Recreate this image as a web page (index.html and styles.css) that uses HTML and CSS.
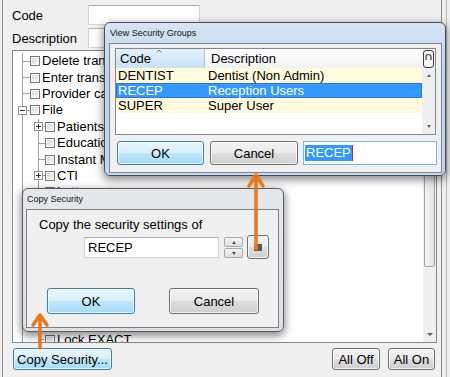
FILE: index.html
```html
<!DOCTYPE html>
<html>
<head>
<meta charset="utf-8">
<title>Security</title>
<link rel="stylesheet" href="styles.css">
</head>
<body>
<div class="outer">
  <div class="win">
    <div class="field"><span class="lbl">Code</span><div class="tb"></div></div>
    <div class="field"><span class="lbl">Description</span><div class="tb"></div></div>
    <div class="tree">
      <div class="tree-body">
        <div class="row"><span class="c1 br"></span><span class="cb"></span><span class="txt">Delete transactions</span></div>
        <div class="row"><span class="c1 br"></span><span class="cb"></span><span class="txt">Enter transactions</span></div>
        <div class="row"><span class="c1 br"></span><span class="cb"></span><span class="txt">Provider calendar</span></div>
        <div class="row"><span class="c1 br"><span class="exp minus"></span></span><span class="cb"></span><span class="txt">File</span></div>
        <div class="row"><span class="c1"></span><span class="c2 br"><span class="exp plus"></span></span><span class="cb"></span><span class="txt">Patients</span></div>
        <div class="row"><span class="c1"></span><span class="c2 br"></span><span class="cb"></span><span class="txt">Education</span></div>
        <div class="row"><span class="c1"></span><span class="c2 br"></span><span class="cb"></span><span class="txt">Instant Messages</span></div>
        <div class="row"><span class="c1"></span><span class="c2 br"><span class="exp plus"></span></span><span class="cb"></span><span class="txt">CTI</span></div>
        <div class="row"><span class="c1"></span><span class="c2 br"></span><span class="cb"></span><span class="txt">Letters</span></div>
        <div class="row"><span class="c1"></span><span class="c2 br"></span><span class="cb"></span><span class="txt">Recall</span></div>
        <div class="row"><span class="c1"></span><span class="c2 br"></span><span class="cb"></span><span class="txt">Referrals</span></div>
        <div class="row"><span class="c1"></span><span class="c2 br"></span><span class="cb"></span><span class="txt">Reports</span></div>
        <div class="row"><span class="c1"></span><span class="c2 br"></span><span class="cb"></span><span class="txt">Setup</span></div>
        <div class="row"><span class="c1"></span><span class="c2 br"></span><span class="cb"></span><span class="txt">Statements</span></div>
        <div class="row"><span class="c1"></span><span class="c2 br"></span><span class="cb"></span><span class="txt">Utilities</span></div>
        <div class="row"><span class="c1"></span><span class="c2 br"></span><span class="cb"></span><span class="txt">Lab cases</span></div>
        <div class="row"><span class="c1"></span><span class="c2 br"></span><span class="cb"></span><span class="txt">Backup</span></div>
        <div class="row"><span class="c1"></span><span class="c2 br"></span><span class="cb"></span><span class="txt">Lock EXACT</span></div>
      </div>
      <div class="vsb">
        <div class="sbb"></div>
        <div class="thumb"></div>
        <div class="track"></div>
        <div class="sbb"><span class="tri-dn"></span></div>
      </div>
    </div>
    <div class="bottom">
      <button class="btn hot copy">Copy Security...</button>
      <button class="btn alloff">All Off</button>
      <button class="btn allon">All On</button>
    </div>
  </div>
</div>

<div class="dlg dlg-view">
  <div class="title">View Security Groups</div>
  <div class="panel">
    <div class="grid">
      <div class="gmain">
        <div class="ghead">
          <div class="gh code">Code<svg class="sort" width="6" height="4" viewBox="0 0 6 4"><path d="M0.5 3.5 L3 1 L5.5 3.5" stroke="#6d7f93" stroke-width="1" fill="none"/></svg></div>
          <div class="gh desc">Description</div>
        </div>
        <div class="grow"><span class="gc code">DENTIST</span><span class="gc desc">Dentist (Non Admin)</span></div>
        <div class="grow sel"><span class="gc code">RECEP</span><span class="gc desc">Reception Users</span></div>
        <div class="grow"><span class="gc code">SUPER</span><span class="gc desc">Super User</span></div>
      </div>
      <div class="gside">
        <div class="gcorner"><svg width="11" height="18" viewBox="0 0 11 18"><rect x="0.5" y="0.5" width="10" height="17" rx="2.5" fill="#f4f4f4" stroke="#3d3d3d"/><path d="M3 10 V7 A2.5 2.5 0 0 1 8 7 V10" stroke="#3d3d3d" stroke-width="1.2" fill="none"/></svg></div>
        <div class="gsb">
          <span class="tri-up"></span>
          <span class="tri-dn"></span>
        </div>
      </div>
    </div>
    <div class="brow">
      <button class="btn hot ok1">OK</button>
      <button class="btn cancel1">Cancel</button>
      <div class="tbx"><span class="seltxt">RECEP</span><span class="caret"></span></div>
    </div>
  </div>
</div>

<div class="dlg dlg-copy">
  <div class="title">Copy Security</div>
  <div class="panel">
    <div class="clabel">Copy the security settings of</div>
    <div class="crow">
      <div class="cinput">RECEP</div>
      <div class="spin">
        <div class="spb"><span class="stri up"></span></div>
        <div class="spb"><span class="stri dn"></span></div>
      </div>
      <button class="btn browse"><svg width="8" height="7" viewBox="0 0 8 7"><path d="M0 0 H8 V7 H0 Z" fill="#5a5a5a"/><path d="M0 0 H3 L0 3 Z" fill="#d8d8d8"/></svg></button>
    </div>
    <div class="cbtns">
      <button class="btn hot ok2">OK</button>
      <button class="btn cancel2">Cancel</button>
    </div>
  </div>
</div>

<svg class="arrows" width="450" height="377" viewBox="0 0 450 377">
  <g stroke="#ec761c" stroke-width="3.5" fill="none" stroke-linecap="round" stroke-linejoin="round">
    <path d="M40 348 V317"/>
    <path d="M33 325 L40 315 L47 325"/>
    <path d="M256 249 V177"/>
    <path d="M249 186 L256 175 L263 186"/>
  </g>
</svg>
</body>
</html>
```

FILE: styles.css
```css
* { box-sizing: border-box; }
html, body { margin: 0; padding: 0; }
body {
  width: 450px;
  height: 377px;
  overflow: hidden;
  position: relative;
  background: #f0f0f0;
  font-family: "Liberation Sans", Arial, sans-serif;
  font-size: 13px;
  color: #000;
}
button { font-family: inherit; font-size: 13px; color: #000; padding: 0; margin: 0; }

.outer { width: 447px; height: 377px; border-right: 1px solid #b8b8b8; }
.win {
  margin-left: 2px;
  width: 440px;
  height: 377px;
  border-left: 1px solid #8c8c8c;
  border-right: 1px solid #8c8c8c;
  padding: 5px 0 0 9px;
}
.field { display: flex; align-items: center; height: 20px; }
.field + .field { margin-top: 3px; }
.lbl { width: 76px; }
.tb { width: 112px; height: 20px; background: #fff; border: 1px solid #d0d3d8; border-top-color: #abadb3; }

.tree {
  margin-top: 2px;
  width: 425px;
  height: 293px;
  border: 1px solid #828790;
  background: #fff;
  display: flex;
  overflow: hidden;
}
.tree-body { flex: 1; padding-top: 2px; overflow: hidden; }
.row { display: flex; align-items: center; height: 16.4px; white-space: nowrap; }
.c1, .c2 { height: 100%; flex: none; display: flex; align-items: center; }
.c1 { width: 17px; background: linear-gradient(#a0a0a0, #a0a0a0) 9px 0 / 1px 100% no-repeat; }
.c1.br {
  background:
    linear-gradient(#a0a0a0, #a0a0a0) 9px 0 / 1px 100% no-repeat,
    linear-gradient(#a0a0a0, #a0a0a0) 9px 50% / 8px 1px no-repeat;
}
.c2 { width: 15px; background: linear-gradient(#a0a0a0, #a0a0a0) 8px 0 / 1px 100% no-repeat; }
.c2.br {
  background:
    linear-gradient(#a0a0a0, #a0a0a0) 8px 0 / 1px 100% no-repeat,
    linear-gradient(#a0a0a0, #a0a0a0) 8px 50% / 7px 1px no-repeat;
}
.exp {
  width: 9px; height: 9px; flex: none;
  border: 1px solid #8f8f8f;
  background: #fff;
}
.c1 .exp { margin-left: 5px; }
.c2 .exp { margin-left: 4px; }
.exp.minus { background: linear-gradient(#333, #333) center / 5px 1px no-repeat, #fff; }
.exp.plus {
  background:
    linear-gradient(#333, #333) center / 5px 1px no-repeat,
    linear-gradient(#333, #333) center / 1px 5px no-repeat,
    #fff;
}
.cb {
  width: 10px; height: 10px; flex: none;
  border: 1px solid #767676;
  background: linear-gradient(135deg, #d6d6d6, #f8f8f8);
  box-shadow: inset 0 0 0 1px #fbfbfb;
  margin-right: 2px;
}
.txt { line-height: 16px; }

.vsb { width: 13px; flex: none; background: #f0f0f0; display: flex; flex-direction: column; }
.sbb { height: 16px; flex: none; display: flex; align-items: center; justify-content: center; }
.thumb {
  height: 200px; flex: none; margin: 0 1px;
  border: 1px solid #a3a3a3; border-radius: 2px;
  background: linear-gradient(90deg, #f3f3f3, #e2e2e2);
}
.track { flex: 1; }
.tri-dn, .tri-up { width: 0; height: 0; border-left: 3px solid transparent; border-right: 3px solid transparent; }
.tri-dn { border-top: 3px solid #606060; }
.tri-up { border-bottom: 3px solid #606060; }

.bottom { display: flex; margin-top: 5px; width: 423px; padding-left: 1px; }
.btn {
  height: 22px;
  border: 1px solid #707070;
  border-radius: 3px;
  background: linear-gradient(#f2f2f2 0%, #ebebeb 48%, #dddddd 52%, #cfcfcf 100%);
  box-shadow: inset 0 0 0 1px rgba(255, 255, 255, 0.7);
  display: flex; align-items: center; justify-content: center;
}
.btn.hot {
  border-color: #3c7fb1;
  background: linear-gradient(#eaf6fd 0%, #d9f0fc 48%, #bee6fd 52%, #a7d9f5 100%);
}
.copy { width: 99px; }
.alloff { width: 48px; margin-left: auto; }
.allon { width: 47px; margin-left: 8px; }

.dlg {
  position: absolute;
  border: 1px solid #46505b;
  border-radius: 6px;
  box-shadow: 0 3px 9px 1px rgba(0, 0, 0, 0.45);
  display: flex;
  flex-direction: column;
}
.title { height: 20px; flex: none; font-size: 9px; display: flex; align-items: center; padding-left: 1px; color: #111; }
.panel { border: 1px solid #7b8591; background: #f0f0f0; flex: none; }

.dlg-view {
  left: 104px; top: 22px; width: 342px; height: 154px;
  padding-left: 4px;
  background: linear-gradient(#d6e4f3, #bed4eb 35%, #c4d7ec);
}
.dlg-view .panel { width: 333px; height: 130px; padding: 4px 0 0 5px; }
.grid { width: 321px; height: 87px; border: 1px solid #828790; background: #fff; display: flex; }
.gmain { width: 306px; display: flex; flex-direction: column; }
.ghead { display: flex; height: 19px; }
.gh { display: flex; align-items: center; border-right: 1px solid #d5d5d5; }
.gh.code {
  width: 89px; padding-left: 4px; position: relative;
  background: linear-gradient(#e3f1fc, #c8e2f7);
  border-right-color: #9fc7e7;
}
.sort { position: absolute; left: 40px; top: 0; }
.gh.desc { flex: 1; padding-left: 6px; background: linear-gradient(#ffffff, #f1f2f4); border-right: none; }
.grow { display: flex; height: 15px; align-items: center; background: #fffbdc; white-space: nowrap; }
.grow.sel { background: #3399ff; color: #fff; box-shadow: inset 0 0 0 1px #2a78d4; }
.gc.code { width: 89px; padding-left: 2px; }
.gc.desc { padding-left: 3px; }
.gside { width: 13px; display: flex; flex-direction: column; }
.gcorner { height: 19px; display: flex; align-items: center; justify-content: center; background: #f6f6f6; }
.gsb {
  flex: 1; background: #f0f0f0;
  display: flex; flex-direction: column; align-items: center; justify-content: space-between;
  padding: 6px 0 6px;
}
.gsb .tri-up, .gsb .tri-dn { border-left-width: 2.5px; border-right-width: 2.5px; }
.brow { display: flex; margin-top: 6px; margin-left: 2px; }
.brow .btn { height: 24px; }
.ok1 { width: 87px; }
.cancel1 { width: 88px; margin-left: 6px; }
.tbx {
  width: 134px; height: 24px; margin-left: 5px;
  background: #fff; border: 1px solid #7eb4ea;
  display: flex; align-items: center; padding-left: 1px;
}
.seltxt { background: #3399ff; color: #fff; line-height: 16px; padding: 0 1px; }
.caret { width: 1px; height: 16px; background: #e02020; }

.dlg-copy {
  left: 22px; top: 188px; width: 262px; height: 144px;
  padding-left: 3px;
  border-color: #555b61;
  background: linear-gradient(#e4e8ec, #dde1e6);
}
.dlg-copy .panel { width: 253px; height: 119px; padding: 7px 0 0 12px; border-color: #7c7f83; }
.clabel { line-height: 16px; height: 16px; }
.crow { display: flex; align-items: flex-start; margin-top: 2px; padding-left: 45px; }
.cinput {
  width: 135px; height: 21px; margin-top: 2px;
  background: #fff; border: 1px solid #d0d3d8; border-top-color: #abadb3;
  display: flex; align-items: center; padding-left: 3px;
}
.spin { width: 19px; margin-left: 5px; margin-top: 2px; display: flex; flex-direction: column; gap: 1px; }
.spb {
  height: 10px; border: 1px solid #a8a8a8; border-radius: 2px;
  background: linear-gradient(#f6f6f6, #dedede);
  display: flex; align-items: center; justify-content: center;
}
.stri { width: 0; height: 0; border-left: 2.5px solid transparent; border-right: 2.5px solid transparent; }
.stri.up { border-bottom: 3px solid #3b4f6e; }
.stri.dn { border-top: 3px solid #3b4f6e; }
.browse { width: 22px; height: 24px; margin-left: 4px; }
.cbtns { display: flex; margin-top: 29px; padding-left: 8px; }
.cbtns .btn { height: 26px; }
.ok2 { width: 88px; }
.cancel2 { width: 90px; margin-left: 34px; }

.arrows { position: absolute; left: 0; top: 0; pointer-events: none; }
```
